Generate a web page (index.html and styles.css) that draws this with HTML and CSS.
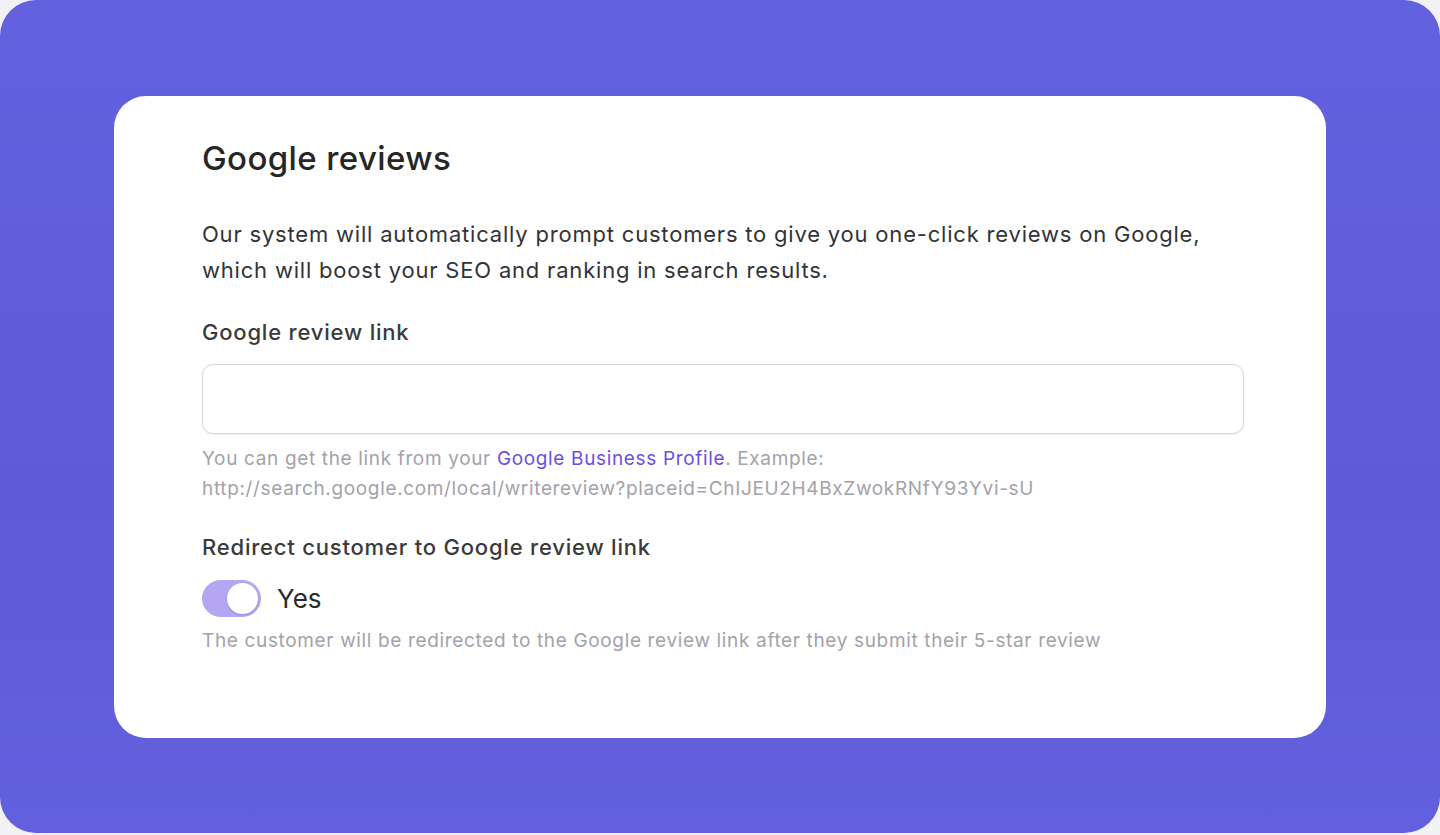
FILE: index.html
```html
<!DOCTYPE html>
<html lang="en">
<head>
    <meta charset="UTF-8">
    <meta name="viewport" content="width=device-width, initial-scale=1.0">
    <title>Google reviews</title>
    <link rel="stylesheet" href="styles.css">
</head>
<body>
    <div class="frame">
        <div class="card">
            <h1>Google reviews</h1>

            <p class="intro">Our system will automatically prompt customers to give you one-click reviews on Google, which will boost your SEO and ranking in search results.</p>

            <label class="field-label" for="reviewLink">Google review link</label>
            <input type="text" id="reviewLink" class="text-input" />
            <p class="hint">You can get the link from your <a href="#">Google Business Profile</a>. Example:<br>http://search.google.com/local/writereview?placeid=ChIJEU2H4BxZwokRNfY93Yvi-sU</p>

            <div class="field-label second">Redirect customer to Google review link</div>
            <div class="toggle-row">
                <span class="toggle on"><span class="knob"></span></span>
                <span class="toggle-text">Yes</span>
            </div>
            <p class="hint">The customer will be redirected to the Google review link after they submit their 5-star review</p>
        </div>
    </div>
</body>
</html>
```

FILE: styles.css
```css
body {
    font-family: Inter, "Noto Sans", sans-serif;
    background-color: #f2f2f4;
    margin: 0;
}

.frame {
    width: 1440px;
    height: 833px;
    box-sizing: border-box;
    padding: 96px 114px;
    background: linear-gradient(180deg, #6361e0 0%, #5f5ad6 60%, #6360df 100%);
    border-radius: 36px;
}

.card {
    background-color: white;
    border-radius: 32px;
    height: 642px;
    box-sizing: border-box;
    padding: 40px 82px 0 88px;
}

h1 {
    font-size: 33px;
    font-weight: 500;
    letter-spacing: 0.4px;
    color: #262626;
    margin: 0 0 36px;
    line-height: 44px;
}

.intro {
    font-size: 22px;
    letter-spacing: 0.8px;
    line-height: 36px;
    color: #333336;
    margin: 0 0 29px;
}

.field-label {
    display: block;
    font-size: 22px;
    font-weight: 500;
    letter-spacing: 0.8px;
    color: #3a3a3d;
    line-height: 30px;
    margin-bottom: 17px;
}

.field-label.second {
    margin-bottom: 18px;
}

.text-input {
    display: block;
    width: 100%;
    height: 70px;
    box-sizing: border-box;
    border: 1.5px solid #d6d6da;
    border-radius: 11px;
    box-shadow: 0 1px 2px rgba(0, 0, 0, 0.06);
    font-size: 20px;
    padding: 0 16px;
    margin: 0 0 10px;
}

.hint {
    font-size: 19px;
    letter-spacing: 0.65px;
    line-height: 30px;
    color: #a3a2aa;
    margin: 0 0 28px;
}

.hint a {
    color: #6c4ee6;
    text-decoration: none;
}

.toggle-row {
    display: flex;
    align-items: center;
    gap: 16px;
    margin-bottom: 9px;
}

.toggle {
    display: inline-flex;
    align-items: center;
    width: 59px;
    height: 37px;
    box-sizing: border-box;
    padding: 3px;
    border-radius: 19px;
    background-color: #b4a6f0;
}

.toggle.on {
    justify-content: flex-end;
}

.knob {
    width: 31px;
    height: 31px;
    border-radius: 50%;
    background-color: white;
    box-shadow: 0 1px 2px rgba(0, 0, 0, 0.15);
}

.toggle-text {
    font-size: 26px;
    color: #2a2a2d;
}
```
